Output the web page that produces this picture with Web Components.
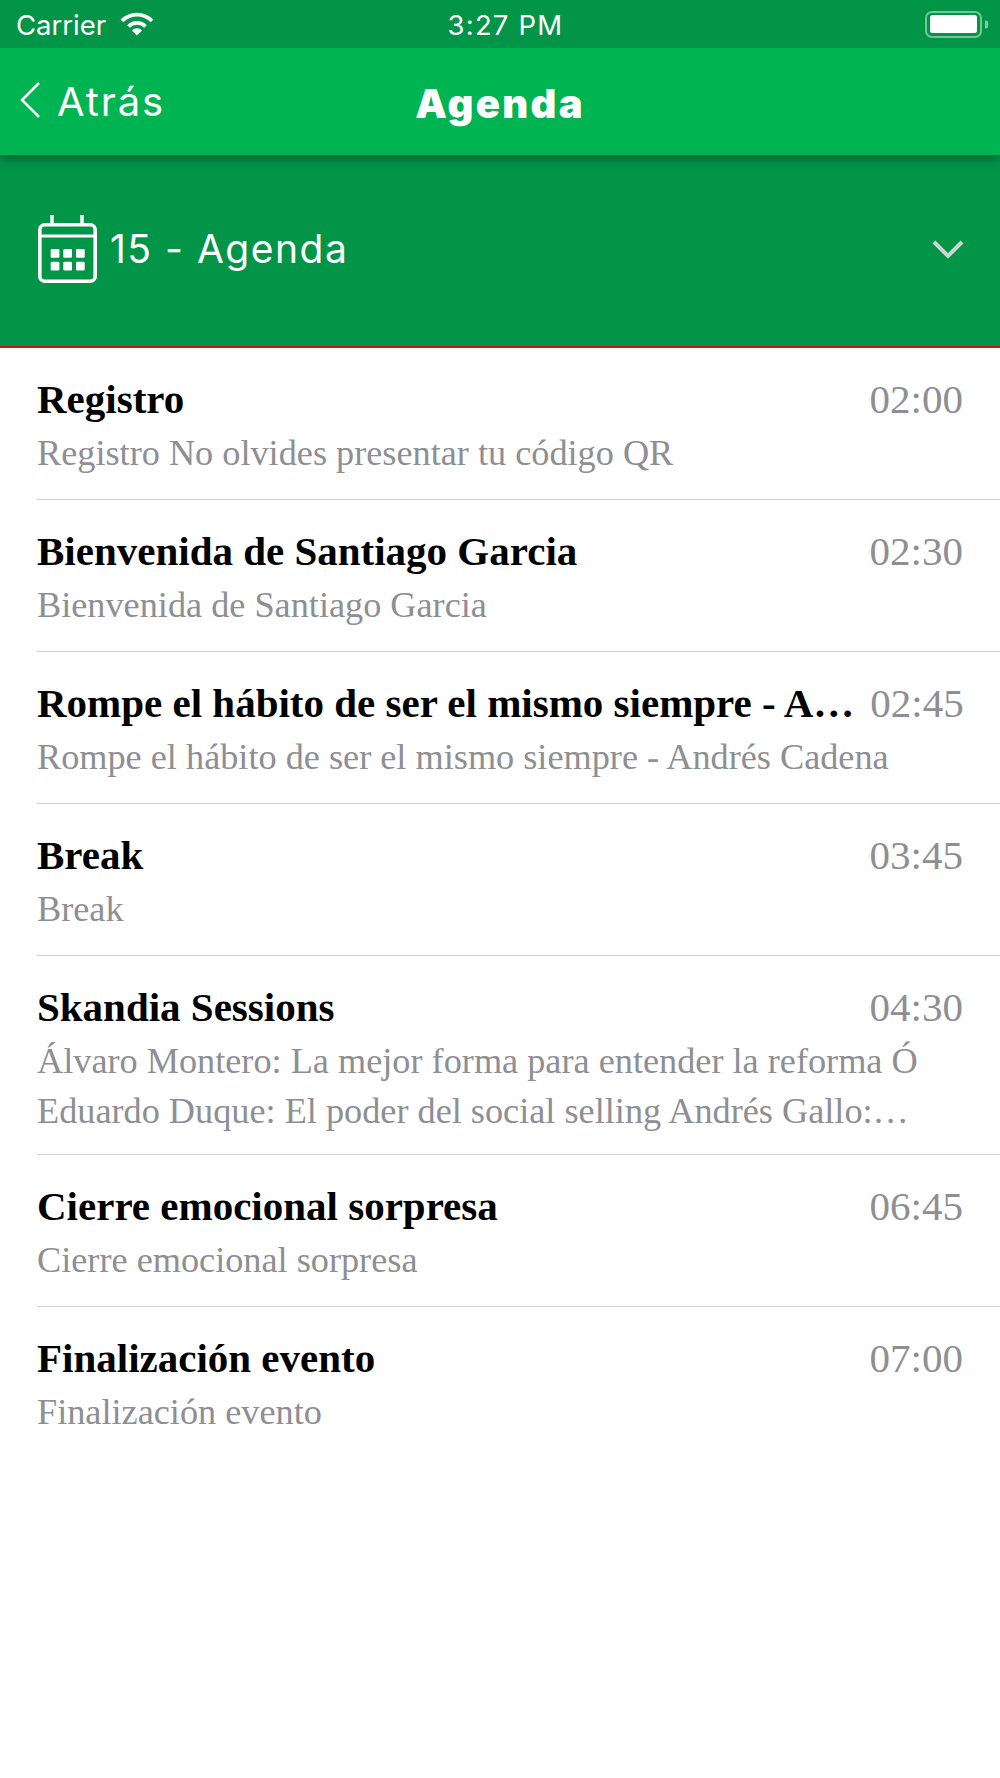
<!DOCTYPE html>
<html>
<head>
<meta charset="utf-8">
<style>
  html, body { margin: 0; padding: 0; background: #fff; }
  body { width: 1000px; height: 1778px; overflow: hidden; }
</style>
</head>
<body>
<agenda-app>
  <status-bar></status-bar>
  <nav-bar title="Agenda" back="Atrás"></nav-bar>
  <day-header label="15 - Agenda"></day-header>
  <agenda-list>
    <agenda-item time="02:00" name="Registro">Registro No olvides presentar tu código QR</agenda-item>
    <agenda-item time="02:30" name="Bienvenida de Santiago Garcia">Bienvenida de Santiago Garcia</agenda-item>
    <agenda-item time="02:45" name="Rompe el hábito de ser el mismo siempre - A…">Rompe el hábito de ser el mismo siempre - Andrés Cadena</agenda-item>
    <agenda-item time="03:45" name="Break">Break</agenda-item>
    <agenda-item time="04:30" name="Skandia Sessions" lines="2">Álvaro Montero: La mejor forma para entender la reforma Ó Eduardo Duque: El poder del social selling Andrés Gallo:…</agenda-item>
    <agenda-item time="06:45" name="Cierre emocional sorpresa">Cierre emocional sorpresa</agenda-item>
    <agenda-item time="07:00" name="Finalización evento" last>Finalización evento</agenda-item>
  </agenda-list>
</agenda-app>
<script>
class AgendaApp extends HTMLElement {
  constructor () {
    super()
    this.attachShadow({ mode: 'open' })
    this.shadowRoot.innerHTML = `
      <style>
        :host { display: flex; flex-direction: column; width: 1000px; height: 1778px; background: #fff; }
      </style>
      <slot></slot>`
  }
}

class StatusBar extends HTMLElement {
  constructor () {
    super()
    this.attachShadow({ mode: 'open' })
    this.shadowRoot.innerHTML = `
      <style>
        :host { display: grid; grid-template-columns: 1fr auto 1fr; align-items: center; height: 48px; background: #029548; color: #fff; font: 27.500px Inter, "Liberation Sans", sans-serif; padding: 0 12px 0 16px; box-sizing: border-box; position: relative; z-index: 2; }
        .left { display: flex; align-items: center; gap: 14px; }
        .left span, .time { padding-top: 2px; }
        .time { letter-spacing: 1.200px; padding-left: 7px; }
        .right { display: flex; justify-content: flex-end; }
        svg { display: block; }
      </style>
      <div class="left">
        <span>Carrier</span>
        <svg width="34" height="24" viewBox="0 0 34 24">
          <path d="M17 23.500l-5-5.100a7 7 0 0 1 10 0z" fill="#fff"/>
          <path d="M8.500 14.500a12 12 0 0 1 17 0" fill="none" stroke="#fff" stroke-width="3.800"/>
          <path d="M2 7.800C10.500 -.5 23.500 -.5 32 7.800" fill="none" stroke="#fff" stroke-width="3.800" transform="translate(0 1)"/>
        </svg>
      </div>
      <span class="time">3:27 PM</span>
      <div class="right">
        <svg width="63" height="27" viewBox="0 0 63 27">
          <rect x="1" y="1" width="55" height="25" rx="6" fill="none" stroke="#fff" stroke-opacity=".45" stroke-width="2"/>
          <rect x="5" y="4" width="47" height="18" rx="2.500" fill="#fff"/>
          <path d="M60 9.500a4 4 0 0 1 0 8z" fill="#fff" fill-opacity=".5"/>
        </svg>
      </div>`
  }
}

class NavBar extends HTMLElement {
  constructor () {
    super()
    this.attachShadow({ mode: 'open' })
    this.shadowRoot.innerHTML = `
      <style>
        :host { display: grid; grid-template-columns: 1fr auto 1fr; align-items: center; height: 107px; background: #00b451; color: #fff; box-shadow: 0 4px 10px rgba(0,0,0,.35); position: relative; z-index: 1; }
        .back { display: flex; align-items: center; gap: 17px; padding-left: 20px; font: 400 40px Inter, sans-serif; letter-spacing: 1.900px; }
        .back svg { margin-bottom: 3px; }
        h1 { margin: 0; font: 900 40px Inter, sans-serif; letter-spacing: 2.300px; padding-top: 3px; }
        svg { display: block; }
      </style>
      <div class="back">
        <svg width="20" height="36" viewBox="0 0 20 36"><path d="M19 1L2 18l17 17" fill="none" stroke="#fff" stroke-width="2.500"/></svg>
        <span></span>
      </div>
      <h1></h1>
      <div></div>`
    this.shadowRoot.querySelector('span').textContent = this.getAttribute('back')
    this.shadowRoot.querySelector('h1').textContent = this.getAttribute('title')
  }
}

class DayHeader extends HTMLElement {
  constructor () {
    super()
    this.attachShadow({ mode: 'open' })
    this.shadowRoot.innerHTML = `
      <style>
        :host { display: flex; align-items: center; justify-content: space-between; height: 193px; box-sizing: border-box; background: #029548; border-bottom: 2px solid #cc1510; color: #fff; padding: 0 36px 3px 38px; }
        .label { display: flex; align-items: center; gap: 13px; font: 400 39px Inter, sans-serif; letter-spacing: 1.500px; }
        .label span { padding-bottom: 2px; }
        svg { display: block; }
      </style>
      <div class="label">
        <svg width="59" height="68" viewBox="0 0 59 68">
          <path d="M14 0v10M44 0v10" stroke="#fff" stroke-width="3.500" fill="none"/>
          <rect x="1.800" y="9.800" width="55.400" height="56.400" rx="5" fill="none" stroke="#fff" stroke-width="3.600"/>
          <path d="M2 21h55" stroke="#fff" stroke-width="3"/>
          <g fill="#fff">
            <rect x="12.700" y="34" width="8.700" height="8.700" rx="1.200"/><rect x="25.300" y="34" width="8.700" height="8.700" rx="1.200"/><rect x="38" y="34" width="8.700" height="8.700" rx="1.200"/>
            <rect x="12.700" y="46.700" width="8.700" height="8.700" rx="1.200"/><rect x="25.300" y="46.700" width="8.700" height="8.700" rx="1.200"/><rect x="38" y="46.700" width="8.700" height="8.700" rx="1.200"/>
          </g>
        </svg>
        <span></span>
      </div>
      <svg width="32" height="20" viewBox="0 0 32 20"><path d="M2 3l14 14L30 3" fill="none" stroke="#cfd4d0" stroke-width="4"/></svg>`
    this.shadowRoot.querySelector('span').textContent = this.getAttribute('label')
  }
}

class AgendaList extends HTMLElement {
  constructor () {
    super()
    this.attachShadow({ mode: 'open' })
    this.shadowRoot.innerHTML = `
      <style>
        :host { display: block; padding-left: 37px; font-family: "Liberation Serif", "Times New Roman", serif; }
      </style>
      <slot></slot>`
  }
}

class AgendaItem extends HTMLElement {
  constructor () {
    super()
    this.attachShadow({ mode: 'open' })
    const lines = this.getAttribute('lines') || 1
    this.shadowRoot.innerHTML = `
      <style>
        :host { display: block; padding: 23px 37px 21px 0; border-bottom: 1px solid #d1d1d1; }
        :host([lines]) { padding-bottom: 18px; }
        :host([last]) { border-bottom: none; }
        .top { display: flex; justify-content: space-between; gap: 16px; height: 56px; align-items: center; margin-bottom: 1px; }
        .name { font-size: 41px; font-weight: bold; color: #000; white-space: nowrap; }
        .time { font-size: 41px; color: #8e8e93; flex: none; }
        .sub { font-size: 36.250px; line-height: 50px; color: #8e8e93; display: -webkit-box; -webkit-box-orient: vertical; -webkit-line-clamp: ${lines}; overflow: hidden; }
      </style>
      <div class="top"><div class="name"></div><div class="time"></div></div>
      <div class="sub"><slot></slot></div>`
    this.shadowRoot.querySelector('.name').textContent = this.getAttribute('name')
    this.shadowRoot.querySelector('.time').textContent = this.getAttribute('time')
  }
}

customElements.define('agenda-app', AgendaApp)
customElements.define('status-bar', StatusBar)
customElements.define('nav-bar', NavBar)
customElements.define('day-header', DayHeader)
customElements.define('agenda-list', AgendaList)
customElements.define('agenda-item', AgendaItem)
</script>
</body>
</html>
